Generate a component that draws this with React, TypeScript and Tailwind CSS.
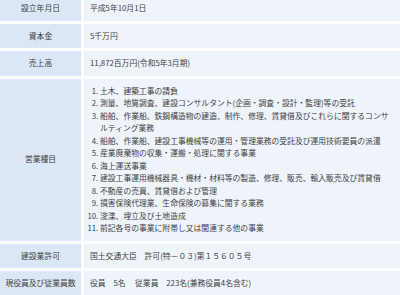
import * as React from 'react'

// 会社概要テーブル - label / value rows
const rows: { label: string; value: React.ReactNode; first?: boolean }[] = [
  { label: '設立年月日', value: '平成5年10月1日', first: true },
  { label: '資本金', value: '5千万円' },
  { label: '売上高', value: '11,872百万円(令和5年3月期)' },
]

const businesses: React.ReactNode[] = [
  '土木、建築工事の請負',
  '測量、地質調査、建設コンサルタント(企画・調査・設計・監理)等の受託',
  <>
    船舶、作業船、鉄鋼構造物の建造、制作、修理、賃貸借及びこれらに関するコンサ
    <br />
    ルティング業務
  </>,
  '船舶、作業船、建設工事機械等の運用・管理業務の受託及び運用技術要員の派遣',
  '産業廃棄物の収集・運搬・処理に関する事業',
  '海上運送事業',
  '建設工事運用機械器具・機材・材料等の製造、修理、販売、輸入販売及び賃貸借',
  '不動産の売買、賃貸借および管理',
  '損害保険代理業、生命保険の募集に関する業務',
  '浚渫、埋立及び土地造成',
  '前記各号の事業に附帯し又は関連する他の事業',
]

function Row({ label, children, first }: { label: string; children: React.ReactNode; first?: boolean }) {
  return (
    <div className="flex gap-[3px]">
      <div
        className={
          'w-[81px] shrink-0 bg-[#dbe7f6] flex items-center justify-center text-center whitespace-nowrap ' +
          (first ? 'pt-[2px] pb-[6px]' : 'py-[6px]')
        }
      >
        {label}
      </div>
      <div
        className={
          'flex-1 bg-[#eff4fb] pl-[6px] flex items-center whitespace-nowrap ' +
          (first ? 'pt-[2px] pb-[6px]' : 'py-[6px]')
        }
      >
        {children}
      </div>
    </div>
  )
}

export default function App() {
  return (
    <div
      className="w-[400px] h-[295px] overflow-hidden bg-white text-[#3f3f3f] text-[7.8px] leading-[12.5px]"
      style={{ fontFamily: '"Noto Sans CJK JP", "Noto Sans", sans-serif' }}
    >
      <div className="flex flex-col gap-[3px]">
        {rows.map((r) => (
          <Row key={r.label} label={r.label} first={r.first}>
            {r.value}
          </Row>
        ))}

        {/* 営業種目 - numbered list */}
        <div className="flex gap-[3px]">
          <div className="w-[81px] shrink-0 bg-[#dbe7f6] flex items-center justify-center">営業種目</div>
          <div className="flex-1 bg-[#eff4fb] py-[6px] pl-[16px] pr-0 overflow-hidden">
            <ol className="list-decimal">
              {businesses.map((b, i) => (
                <li key={i} className="whitespace-nowrap">
                  {b}
                </li>
              ))}
            </ol>
          </div>
        </div>

        <Row label="建設業許可">国土交通大臣　許可(特－０３)第１５６０５号</Row>
        <Row label="現役員及び従業員数">役員　5名　 従業員　223名(兼務役員4名含む)</Row>
      </div>
    </div>
  )
}
